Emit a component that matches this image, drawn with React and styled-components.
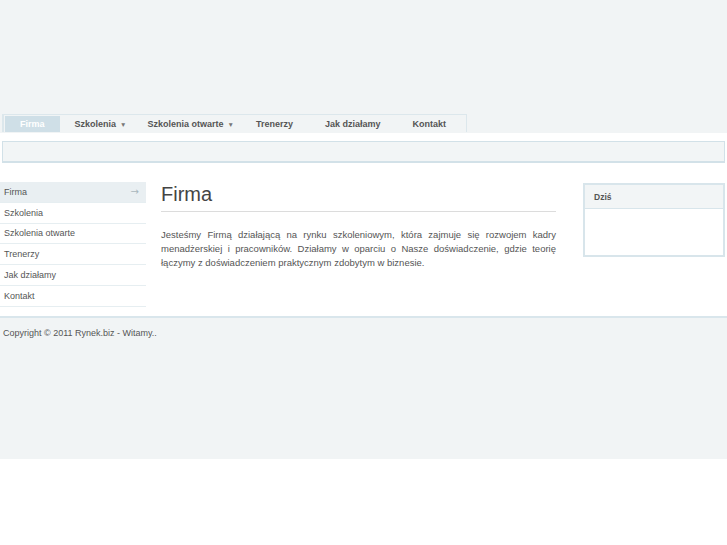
import React from 'react';
import styled, { createGlobalStyle } from 'styled-components';

const GlobalStyle = createGlobalStyle`
  html, body {
    margin: 0;
    padding: 0;
    background: #ffffff;
    font-family: "Liberation Sans", Arial, sans-serif;
    color: #555;
  }
`;

const Header = styled.header`
  background: #f1f4f5;
  height: 115px;
`;

const NavWrap = styled.div`
  background: #f1f4f5;
  height: 19px;
  margin-top: -1px;
`;

const Nav = styled.ul`
  display: flex;
  list-style: none;
  margin: 0 0 0 2px;
  padding: 1px 0 0 1px;
  width: 465px;
  height: 18px;
  box-sizing: border-box;
  border: 1px solid #dce7ec;
  border-bottom: none;
  border-left: 2px solid #dce7ec;
`;

const NavItem = styled.li`
  display: flex;
  align-items: center;
  padding: 0 ${p => (p.$caret ? 6 : p.$wide ? 16 : 15)}px 0 ${p => (p.$wide ? 16 : 15)}px;
  font-size: 9px;
  font-weight: bold;
  color: ${p => (p.$active ? '#ffffff' : '#555')};
  background: ${p => (p.$active ? '#cfdfe7' : 'transparent')};
  white-space: nowrap;
`;

const Caret = styled.span`
  font-size: 6.5px;
  margin-left: 4px;
  color: #777;
`;

const SubBar = styled.div`
  background: #ffffff;
  padding: 8px 2px 0 2px;
`;

const SubBox = styled.div`
  height: 19px;
  border: 1px solid #d2e1e8;
  border-bottom-width: 2px;
  background: #f2f5f6;
`;

const Main = styled.main`
  display: grid;
  grid-template-columns: 146px 395px 1fr;
  column-gap: 15px;
  padding: 19px 2px 9px 0;
  align-items: start;
`;

const Side = styled.ul`
  list-style: none;
  margin: 0;
  padding: 0;
`;

const SideItem = styled.li`
  display: flex;
  justify-content: space-between;
  align-items: center;
  height: 19.75px;
  padding: 0 7px 0 4px;
  font-size: 9px;
  color: #555;
  background: ${p => (p.$active ? '#e9eff2' : 'transparent')};
  border-bottom: 1px solid #e6eef1;
  box-sizing: content-box;
`;

const Arrow = styled.span`
  color: #a9b7bd;
  font-size: 10px;
  font-family: "DejaVu Sans", sans-serif;
`;

const Content = styled.section`
  padding-top: 1px;
`;

const Title = styled.h1`
  margin: 0;
  font-size: 20px;
  font-weight: normal;
  color: #444;
  padding-bottom: 5px;
  border-bottom: 1px solid #dcdcdc;
`;

const Text = styled.p`
  margin: 16px 0 0 0;
  font-size: 9.5px;
  line-height: 14px;
  text-align: justify;
  color: #555;
`;

const Box = styled.aside`
  margin-left: 12px;
  margin-top: 1px;
  border: 2px solid #d8e5eb;
  height: 70px;
`;

const BoxHead = styled.div`
  height: 23px;
  display: flex;
  align-items: center;
  padding: 0 9px;
  font-size: 8.5px;
  font-weight: bold;
  color: #555;
  background: #f2f5f6;
  border-bottom: 1px solid #d8e5eb;
`;

const Footer = styled.footer`
  background: #f1f4f5;
  border-top: 2px solid #d9e6ec;
  height: 143px;
  padding: 10px 3px 0;
  box-sizing: border-box;
  font-size: 9px;
  color: #555;
`;

const tabs = [
  { label: 'Firma', active: true },
  { label: 'Szkolenia', caret: true },
  { label: 'Szkolenia otwarte', caret: true },
  { label: 'Trenerzy', wide: true },
  { label: 'Jak działamy', wide: true },
  { label: 'Kontakt', wide: true },
];

const links = ['Firma', 'Szkolenia', 'Szkolenia otwarte', 'Trenerzy', 'Jak działamy', 'Kontakt'];

export default function App() {
  return (
    <>
      <GlobalStyle />
      <Header />
      <NavWrap>
        <Nav>
          {tabs.map(t => (
            <NavItem key={t.label} $active={t.active} $caret={t.caret} $wide={t.wide}>
              {t.label}
              {t.caret && <Caret>▼</Caret>}
            </NavItem>
          ))}
        </Nav>
      </NavWrap>
      <SubBar>
        <SubBox />
      </SubBar>
      <Main>
        <Side>
          {links.map((l, i) => (
            <SideItem key={l} $active={i === 0}>
              {l}
              {i === 0 && <Arrow>→</Arrow>}
            </SideItem>
          ))}
        </Side>
        <Content>
          <Title>Firma</Title>
          <Text>
            Jesteśmy Firmą działającą na rynku szkoleniowym, która zajmuje się rozwojem kadry
            menadżerskiej i pracowników. Działamy w oparciu o Nasze doświadczenie, gdzie teorię
            łączymy z doświadczeniem praktycznym zdobytym w biznesie.
          </Text>
        </Content>
        <Box>
          <BoxHead>Dziś</BoxHead>
        </Box>
      </Main>
      <Footer>Copyright © 2011 Rynek.biz - Witamy..</Footer>
    </>
  );
}
